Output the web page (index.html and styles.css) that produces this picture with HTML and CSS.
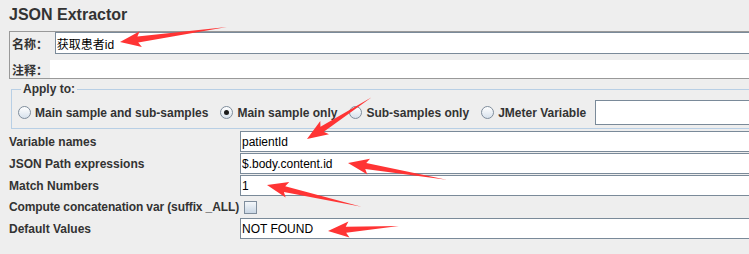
FILE: index.html
```html
<!DOCTYPE html>
<html lang="zh">
<head>
    <meta charset="UTF-8">
    <title>JSON Extractor</title>
    <link rel="stylesheet" href="styles.css">
</head>
<body>
<div class="page">
    <h1 class="title">JSON Extractor</h1>

    <div class="named">
        <div class="named-row">
            <span class="cn-label">名称：</span>
            <input class="name-field" type="text" value="获取患者id">
        </div>
        <div class="named-row comment-row">
            <span class="cn-label">注释：</span>
            <div class="comment-area"></div>
        </div>
    </div>

    <fieldset class="apply">
        <legend>Apply to:</legend>
        <div class="radios">
            <label class="option"><span class="radio"></span>Main sample and sub-samples</label>
            <label class="option"><span class="radio checked"></span>Main sample only</label>
            <label class="option"><span class="radio"></span>Sub-samples only</label>
            <label class="option"><span class="radio"></span>JMeter Variable</label>
            <input class="var-field" type="text" value="">
        </div>
    </fieldset>

    <div class="form">
        <span class="label">Variable names</span>
        <input class="field" type="text" value="patientId">

        <span class="label">JSON Path expressions</span>
        <input class="field" type="text" value="$.body.content.id">

        <span class="label">Match Numbers</span>
        <input class="field" type="text" value="1">

        <span class="label label-long">Compute concatenation var (suffix _ALL)</span>
        <span class="check-cell"><span class="checkbox"></span></span>

        <span class="label">Default Values</span>
        <input class="field" type="text" value="NOT FOUND">
    </div>

    <!-- annotation arrows -->
    <svg class="arrows" width="749" height="254" viewBox="0 0 749 254">
        <g fill="#ff3434">
            <polygon points="0,0 21,-8 18,-3 108,0 18,3 21,8" transform="translate(120 42) rotate(-8)"/>
            <polygon points="0,0 21,-8 18,-3 77,0 18,3 21,8" transform="translate(307 139) rotate(-32.9)"/>
            <polygon points="0,0 21,-8 18,-3 100,0 18,3 21,8" transform="translate(348 163) rotate(9.7)"/>
            <polygon points="0,0 21,-8 18,-3 97,0 18,3 21,8" transform="translate(267 185) rotate(13)"/>
            <polygon points="0,0 21,-8 18,-3 71,0 18,3 21,8" transform="translate(328 231) rotate(-4)"/>
        </g>
    </svg>
</div>
</body>
</html>
```

FILE: styles.css
```css
body {
    margin: 0;
    background-color: #eeeeee;
    font-family: "Liberation Sans", Arial, sans-serif;
    color: #333333;
}

.page {
    position: relative;
    width: 749px;
    height: 254px;
    overflow: hidden;
}

.title {
    font-size: 16px;
    font-weight: bold;
    line-height: 20px;
    margin: 5px 0 6px 9px;
    color: #333333;
}

/* name / comment panel */
.named {
    margin-left: 9px;
    width: 900px;
    border: 1px solid #999999;
    border-right: none;
}
.named-row {
    display: flex;
    align-items: center;
    height: 22px;
}
.comment-row {
    height: 18px;
    margin-top: 6px;
}
.cn-label {
    font-family: "Liberation Sans", "Noto Sans CJK SC", sans-serif;
    font-size: 12px;
    font-weight: bold;
    width: 38px;
    padding-left: 2px;
}
.name-field {
    box-sizing: border-box;
    margin: 0 0 0 5px;
    height: 22px;
    width: 860px;
    padding: 0 0 0 1px;
    border: 1px solid #7a8a99;
    background: #ffffff;
    font-family: "Liberation Sans", "Noto Sans CJK SC", sans-serif;
    font-size: 12px;
    color: #000000;
    outline: none;
}
.comment-area {
    flex: 1;
    height: 18px;
    background: #ffffff;
}

/* apply to */
.apply {
    margin: 3px 0 0 11px;
    padding: 4px 0 3px 6px;
    width: 900px;
    border: 1px solid #b8cfe5;
    border-right: none;
}
.apply legend {
    margin-left: 3px;
    padding: 0 2px;
    font-size: 12px;
    font-weight: bold;
    line-height: 14px;
}
.radios {
    display: flex;
    align-items: center;
    height: 25px;
}
.option {
    display: flex;
    align-items: center;
    font-size: 12px;
    font-weight: bold;
    margin-right: 12px;
}
.radio {
    box-sizing: border-box;
    width: 13px;
    height: 13px;
    margin-right: 4px;
    border-radius: 50%;
    border: 1px solid #7f8d9c;
    background: linear-gradient(to bottom, #ffffff, #d7e1ec);
    display: flex;
    align-items: center;
    justify-content: center;
}
.radio.checked::after {
    content: "";
    width: 5px;
    height: 5px;
    border-radius: 50%;
    background: #1a1a1a;
}
.var-field {
    box-sizing: border-box;
    margin: 0 0 0 -3px;
    width: 300px;
    height: 25px;
    border: 1px solid #7a8a99;
    background: #ffffff;
    outline: none;
}

/* extractor fields */
.form {
    display: grid;
    grid-template-columns: 231px 600px;
    grid-template-rows: 21px 21px 21px 20px 21px;
    row-gap: 1px;
    margin: 2px 0 0 9px;
}
.label {
    display: flex;
    align-items: center;
    font-size: 12px;
    font-weight: bold;
    white-space: nowrap;
}
.label-long {
    letter-spacing: -0.12px;
}
.field {
    box-sizing: border-box;
    margin: 0;
    height: 21px;
    width: 600px;
    padding: 0 0 0 1px;
    border: 1px solid #7a8a99;
    background: #ffffff;
    font-family: "Liberation Sans", Arial, sans-serif;
    font-size: 12px;
    color: #000000;
    outline: none;
}
.check-cell {
    display: flex;
    align-items: center;
}
.checkbox {
    box-sizing: border-box;
    width: 13px;
    height: 13px;
    margin-left: 4px;
    border: 1px solid #7f8d9c;
    background: linear-gradient(to bottom, #f4f7fa, #c9d6e4);
}

.arrows {
    position: absolute;
    left: 0;
    top: 0;
    pointer-events: none;
}
```
